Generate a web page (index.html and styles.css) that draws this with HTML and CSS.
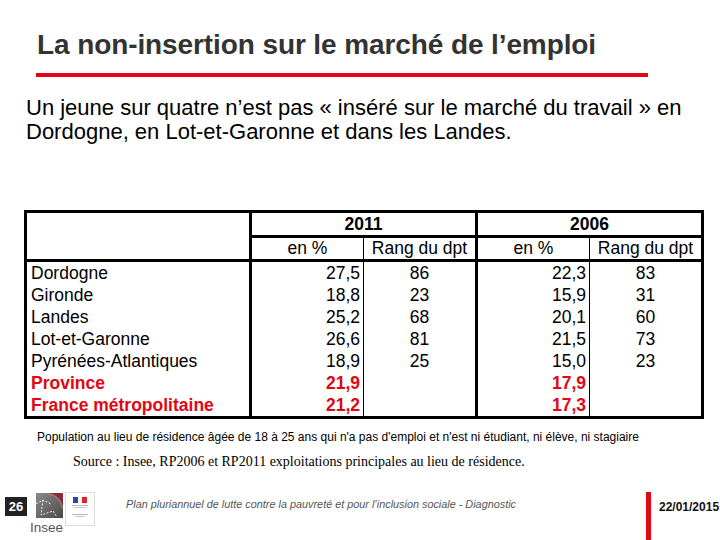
FILE: index.html
```html
<!DOCTYPE html>
<html lang="fr">
<head>
<meta charset="utf-8">
<title>La non-insertion sur le marché de l'emploi</title>
<link rel="stylesheet" href="styles.css">
</head>
<body>
<div class="slide">
  <h1 class="title">La non-insertion sur le marché de l’emploi</h1>
  <div class="rule"></div>
  <p class="lead">Un jeune sur quatre n’est pas « inséré sur le marché du travail » en Dordogne, en Lot-et-Garonne et dans les Landes.</p>

  <table class="data">
    <colgroup>
      <col class="c-label"><col class="c-num"><col class="c-num"><col class="c-num"><col class="c-num">
    </colgroup>
    <thead>
      <tr class="h1">
        <th class="blank" rowspan="2"></th>
        <th colspan="2" class="year">2011</th>
        <th colspan="2" class="year">2006</th>
      </tr>
      <tr class="h2">
        <th class="sub">en %</th>
        <th class="sub thin">Rang du dpt</th>
        <th class="sub grp">en %</th>
        <th class="sub thin">Rang du dpt</th>
      </tr>
    </thead>
    <tbody>
      <tr><td class="lab">Dordogne</td><td class="pct">27,5</td><td class="rank thin">86</td><td class="pct grp">22,3</td><td class="rank thin">83</td></tr>
      <tr><td class="lab">Gironde</td><td class="pct">18,8</td><td class="rank thin">23</td><td class="pct grp">15,9</td><td class="rank thin">31</td></tr>
      <tr><td class="lab">Landes</td><td class="pct">25,2</td><td class="rank thin">68</td><td class="pct grp">20,1</td><td class="rank thin">60</td></tr>
      <tr><td class="lab">Lot-et-Garonne</td><td class="pct">26,6</td><td class="rank thin">81</td><td class="pct grp">21,5</td><td class="rank thin">73</td></tr>
      <tr><td class="lab">Pyrénées-Atlantiques</td><td class="pct">18,9</td><td class="rank thin">25</td><td class="pct grp">15,0</td><td class="rank thin">23</td></tr>
      <tr class="red"><td class="lab">Province</td><td class="pct">21,9</td><td class="rank thin"></td><td class="pct grp">17,9</td><td class="rank thin"></td></tr>
      <tr class="red"><td class="lab">France métropolitaine</td><td class="pct">21,2</td><td class="rank thin"></td><td class="pct grp">17,3</td><td class="rank thin"></td></tr>
    </tbody>
  </table>

  <p class="note">Population au lieu de résidence âgée de 18 à 25 ans qui n'a pas d'emploi et n'est ni étudiant, ni élève, ni stagiaire</p>
  <p class="source">Source : Insee, RP2006 et RP2011 exploitations principales au lieu de résidence.</p>

  <footer class="foot">
    <div class="pagenum">26</div>
    <div class="insee">
      <svg width="36" height="42" viewBox="0 0 36 42">
        <defs>
          <linearGradient id="g" x1="0" y1="0" x2="1" y2="1">
            <stop offset="0" stop-color="#8a8a8a"/>
            <stop offset="1" stop-color="#4a4a4a"/>
          </linearGradient>
        </defs>
        <rect x="8" y="1" width="27" height="25" fill="url(#g)"/>
        <path d="M19 1 A16 16 0 0 1 35 17 L35 1 Z" fill="#8a2a3a"/>
        <path d="M20 2 A15 15 0 0 1 34 16" stroke="#c77" stroke-width="1" fill="none"/>
        <path d="M2 15 L15 8 L23 12 M15 8 L13 23 L25 19 L29 25" stroke="#eee" stroke-width="1" stroke-dasharray="2 1.5" fill="none"/>
        <text x="2" y="40" class="insee-t">Insee</text>
      </svg>
    </div>
    <div class="marianne">
      <svg width="30" height="34" viewBox="0 0 30 34">
        <rect x="0.5" y="0.5" width="29" height="33" fill="#fff" stroke="#ddd"/>
        <rect x="8" y="5" width="5" height="6" fill="#2b4aa0"/>
        <rect x="13" y="5" width="4" height="6" fill="#f4f4f4"/>
        <rect x="17" y="5" width="5" height="6" fill="#d9272e"/>
        <rect x="7" y="13" width="16" height="1" fill="#bbb"/>
        <rect x="8" y="15" width="14" height="1" fill="#ccc"/>
        <rect x="7" y="22" width="16" height="1" fill="#bbb"/>
        <rect x="10" y="24" width="10" height="1" fill="#ccc"/>
      </svg>
    </div>
    <div class="foot-text">Plan pluriannuel de lutte contre la pauvreté et pour l’inclusion sociale - Diagnostic</div>
    <div class="redbar"></div>
    <div class="date">22/01/2015</div>
  </footer>
</div>
</body>
</html>
```
FILE: styles.css
```css
html, body {
  margin: 0;
  padding: 0;
  background: #fff;
}
.slide {
  width: 720px;
  height: 540px;
  position: relative;
  overflow: hidden;
  font-family: "Liberation Sans", Arial, sans-serif;
  color: #000;
}
.title {
  margin: 0;
  padding: 29px 0 0 37px;
  font-size: 28px;
  font-weight: bold;
  line-height: 32px;
  color: #333;
  letter-spacing: -0.1px;
}
.rule {
  margin: 12px 0 0 36px;
  width: 612px;
  height: 4px;
  background: #e30613;
}
.lead {
  margin: 19px 0 0 26px;
  width: 690px;
  font-size: 22px;
  line-height: 24px;
  color: #000;
}
.data {
  margin: 66px 0 0 24px;
  border-collapse: collapse;
  border: 3px solid #000;
  font-size: 17.5px;
  table-layout: fixed;
  width: 677px;
}
.c-label { width: 225px; }
.c-num { width: 113px; }
.data th, .data td {
  padding: 0;
  white-space: nowrap;
}
.data .blank {
  border-right: 3px solid #000;
}
.h1 th {
  height: 19px;
  line-height: 22px;
  font-weight: bold;
  border-bottom: 3px solid #000;
  border-left: 3px solid #000;
}
.h2 th {
  height: 21px;
  line-height: 21px;
  font-weight: normal;
  border-bottom: 3px solid #000;
}
.h2 .thin, .data td.thin { border-left: 1px solid #000; }
.h2 .grp, .data td.grp { border-left: 3px solid #000; }
.data td {
  height: 22px;
  line-height: 21px;
}
.lab {
  text-align: left;
  padding-left: 4px !important;
  border-right: 3px solid #000;
}
.pct {
  text-align: right;
  padding-right: 3px !important;
}
.rank {
  text-align: center;
}
.red td {
  color: #e30613;
  font-weight: bold;
}
.note {
  margin: 11px 0 0 37px;
  font-size: 12px;
  line-height: 14px;
  color: #000;
}
.source {
  margin: 10px 0 0 73px;
  font-family: "Liberation Serif", "Times New Roman", serif;
  font-size: 14px;
  line-height: 16px;
}
.foot {
  position: absolute;
  left: 0;
  right: 0;
  top: 490px;
  height: 50px;
  display: flex;
  align-items: flex-start;
}
.pagenum {
  margin: 7px 0 0 5px;
  width: 22px;
  height: 19px;
  background: #222;
  color: #fff;
  font-weight: bold;
  font-size: 13px;
  line-height: 19px;
  text-align: center;
}
.insee {
  margin: 2px 0 0 1px;
  height: 42px;
}
.insee-t {
  font-family: "Liberation Sans", Arial, sans-serif;
  font-size: 13.5px;
  fill: #555;
}
.marianne {
  margin: 2px 0 0 1px;
}
.foot-text {
  margin: 8px 0 0 31px;
  font-size: 10.85px;
  font-style: italic;
  color: #555;
  white-space: nowrap;
}
.redbar {
  margin: 2px 0 0 auto;
  width: 5px;
  height: 48px;
  background: #e30613;
}
.date {
  margin: 10px 0 0 8px;
  width: 61px;
  font-size: 12px;
  font-weight: bold;
  color: #111;
  white-space: nowrap;
}
```
